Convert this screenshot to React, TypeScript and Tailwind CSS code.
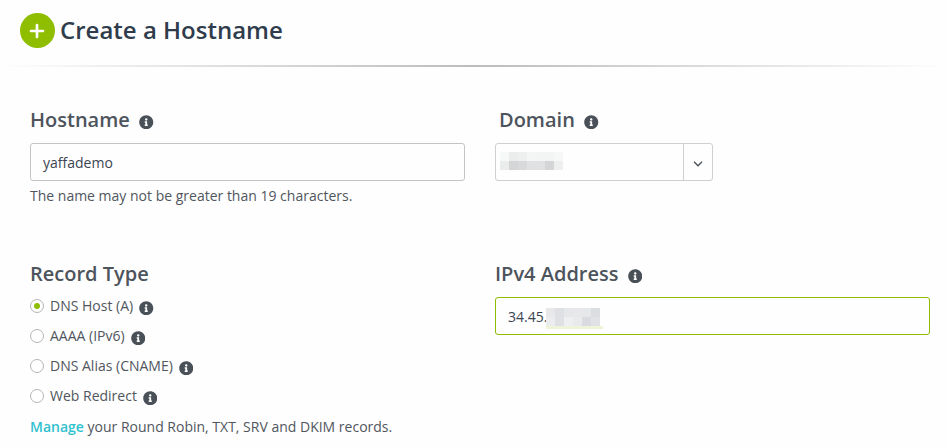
import type { ReactNode } from 'react';
import { FaInfoCircle } from 'react-icons/fa';

const domainMask = [
  ['#f7f8f8', '#ebecec', '#eeefef', '#f4f5f5', '#f3f4f4', '#f3f4f4', '#f6f7f7'],
  ['#ebeded', '#d4d5d7', '#d8d9db', '#e0e1e3', '#e0e1e3', '#d4d5d7', '#edefef'],
];

const addressMask = [
  ['#e8e8ea', '#dfe0e3', '#e6e7e9', '#e8e8ea', '#e6e7e9', '#dcdde1'],
  ['#ebecee', '#dfe0e3', '#efeff1', '#e9eaec', '#dadbe0', '#e1e2e5'],
];

const recordTypes = ['DNS Host (A)', 'AAAA (IPv6)', 'DNS Alias (CNAME)', 'Web Redirect'];

function Mask({ rows }: { rows: string[][] }) {
  return (
    <div>
      {rows.map((row, r) => (
        <div key={r} className="flex">
          {row.map((color, c) => (
            <div key={c} className="h-[9px] w-[9px]" style={{ backgroundColor: color }} />
          ))}
        </div>
      ))}
    </div>
  );
}

function Heading({ children, info = true, className = '' }: { children: ReactNode; info?: boolean; className?: string }) {
  return (
    <h2 className={`flex h-[38px] items-center text-[20px] font-semibold text-[#4d545c] ${className}`}>
      <span>{children}</span>
      {info && <FaInfoCircle className="mt-[4px] ml-[9.5px] size-[14.5px] text-[#495057]" />}
    </h2>
  );
}

export default function App() {
  return (
    <main className="h-[448px] w-[947px] overflow-hidden bg-[#fefefe] font-['Open_Sans','Noto_Sans',sans-serif] text-[14px] text-[#50565d]">
      <header className="flex h-[65px] items-center pb-[4px] pl-[20px]">
        <div className="flex size-[35px] items-center justify-center rounded-full bg-[#8fbe00]">
          <svg viewBox="0 0 16 16" className="mr-px size-4" fill="none" stroke="white" strokeWidth="2.7" strokeLinecap="round">
            <path d="M8 2v12M2 8h12" />
          </svg>
        </div>
        <h1 className="mb-[2px] ml-[5px] text-[24px] font-semibold text-[#2f3c4c]">Create a Hostname</h1>
      </header>
      <div className="h-[2px] bg-linear-to-r from-[#fefefe] via-[#bcbcbc] to-[#fefefe]" />

      <div className="grid grid-cols-[435px_435px] gap-x-[30px] pt-[34px] pl-[30px]">
        <section className="h-[154px]">
          <Heading>Hostname</Heading>
          <div className="mt-[4px] flex h-[38px] items-center rounded-[3px] border border-[#c4c4c4] px-[12px] text-[#3b4552]">
            yaffademo
          </div>
          <p className="mt-[5px] leading-5">The name may not be greater than 19 characters.</p>
        </section>

        <section>
          <Heading className="pl-[4px]">Domain</Heading>
          <div className="mt-[4px] flex h-[38px] w-[218px] rounded-[3px] border border-[#cfcfcf]">
            <div className="flex-1 pt-[8px] pl-[4px]">
              <Mask rows={domainMask} />
            </div>
            <div className="flex w-[29px] items-center justify-center border-l border-[#cfcfcf]">
              <svg viewBox="0 0 10 6" className="mt-[3px] mr-px h-[6px] w-[10px]" fill="none" stroke="#495057" strokeWidth="1.3">
                <path d="M1 .8l4 4 4-4" />
              </svg>
            </div>
          </div>
        </section>

        <section>
          <Heading info={false}>Record Type</Heading>
          <div className="-mt-[2px]">
            {recordTypes.map((label, i) => (
              <div key={label} className="flex h-[30px] items-center">
                <span className="flex size-[14px] items-center justify-center rounded-full border border-[#b5b5b5] bg-white">
                  {i === 0 && <span className="size-[6px] rounded-full bg-[#8fbe00]" />}
                </span>
                <span className="mb-[2px] ml-[6px]">{label}</span>
                <FaInfoCircle className="mt-[4px] ml-[6px] size-[14.5px] text-[#495057]" />
              </div>
            ))}
          </div>
          <p className="mt-[6px] leading-5">
            <a className="font-semibold text-[#2fc1cf]">Manage</a> your Round Robin, TXT, SRV and DKIM records.
          </p>
        </section>

        <section>
          <Heading>IPv4 Address</Heading>
          <div className="mt-[4px] flex h-[38px] rounded-[3px] border border-[#8fbe00] pl-[12px] text-[#3b4552]">
            <span className="w-[38px] leading-[37px]">34.45.</span>
            <div className="w-[57px] pt-[10px]">
              <Mask rows={addressMask} />
              <div className="h-[3px] bg-[#eef4d8]" />
            </div>
          </div>
        </section>
      </div>
    </main>
  );
}
